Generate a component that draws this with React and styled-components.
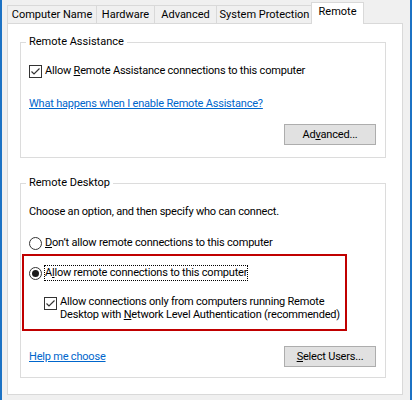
import React from 'react'
import styled, { createGlobalStyle } from 'styled-components'

const GlobalStyle = createGlobalStyle`
    html, body {
        margin: 0;
        padding: 0;
        background: #f0f0f0;
    }
    body {
        font-family: Roboto, "Liberation Sans", Arial, sans-serif;
        font-size: 11px;
        letter-spacing: -0.2px;
        color: #000;
    }
`

const TABS = [
    { label: 'Computer Name', width: 90 },
    { label: 'Hardware', width: 59 },
    { label: 'Advanced', width: 63 },
    { label: 'System Protection', width: 97 },
    { label: 'Remote', width: 53, active: true },
]

function CheckMark() {
    return (
        <svg width="13" height="13" viewBox="0 0 13 13">
            <rect x="0.5" y="0.5" width="12" height="12" fill="#fff" stroke="#333" />
            <path d="M2.5 6.5 L5 9 L10.5 3.5" fill="none" stroke="#333" strokeWidth="1.2" />
        </svg>
    )
}

function RadioMark({ checked }) {
    return (
        <svg width="13" height="13" viewBox="0 0 13 13">
            <circle cx="6.5" cy="6.5" r="6" fill="#fff" stroke="#333" />
            {checked ? <circle cx="6.5" cy="6.5" r="3.5" fill="#1a1a1a" /> : null}
        </svg>
    )
}

export default function App() {
    return (
        <Window>
            <GlobalStyle />
            <TabRow>
                {TABS.map(t => (
                    <Tab key={t.label} width={t.width} active={t.active}>{t.label}</Tab>
                ))}
            </TabRow>
            <Panel>
                <Group>
                    <Legend>Remote Assistance</Legend>
                    <GroupBody>
                        <OptionRow>
                            <CheckMark />
                            <span>Allow <U>R</U>emote Assistance connections to this computer</span>
                        </OptionRow>
                        <Link href="#" top={19}>What happens when I enable Remote Assistance?</Link>
                        <ButtonRow top={13}>
                            <Button>Ad<U>v</U>anced...</Button>
                        </ButtonRow>
                    </GroupBody>
                </Group>

                <Group top={18} bottom={10}>
                    <Legend>Remote Desktop</Legend>
                    <GroupBody>
                        <Line>Choose an option, and then specify who can connect.</Line>
                        <OptionRow top={17}>
                            <RadioMark />
                            <span><U>D</U>on’t allow remote connections to this computer</span>
                        </OptionRow>
                        <Highlight>
                            <OptionRow>
                                <RadioMark checked />
                                <Focused>A<U>l</U>low remote connections to this computer</Focused>
                            </OptionRow>
                            <OptionRow top={15} indent={15} start>
                                <BoxSlot><CheckMark /></BoxSlot>
                                <Wrapped>
                                    Allow connections only from computers running Remote<br />
                                    Desktop with <U>N</U>etwork Level Authentication (recommended)
                                </Wrapped>
                            </OptionRow>
                        </Highlight>
                        <ButtonRow top={15} spread>
                            <Link href="#" inRow>Help me choose</Link>
                            <Button><U>S</U>elect Users...</Button>
                        </ButtonRow>
                    </GroupBody>
                </Group>
            </Panel>
        </Window>
    )
}

const Window = styled.div`
    width: 412px;
    height: 400px;
    box-sizing: border-box;
    background: #f0f0f0;
    border-left: 2px solid #1c72c4;
    border-right: 2px solid #1c72c4;
    padding: 2px 7px 5px 5px;
    display: flex;
    flex-direction: column;
`

const TabRow = styled.div`
    display: flex;
    align-items: flex-end;
    height: 21px;
`

const Tab = styled.div`
    position: relative;
    box-sizing: border-box;
    width: ${props => props.width}px;
    height: ${props => props.active ? 22 : 18}px;
    margin-left: ${props => props.active ? -2 : -1}px;
    margin-bottom: ${props => props.active ? -1 : 0}px;
    z-index: ${props => props.active ? 1 : 0};
    background: ${props => props.active ? '#fff' : '#f0f0f0'};
    border: 1px solid #d9d9d9;
    border-bottom: none;
    display: flex;
    align-items: center;
    justify-content: center;
    padding-bottom: ${props => props.active ? 3 : 0}px;
    line-height: 14px;
    letter-spacing: 0;
    white-space: nowrap;

    &:first-child {
        margin-left: 0;
    }
`

const Panel = styled.div`
    flex: 1;
    box-sizing: border-box;
    background: #fff;
    border: 1px solid #d9d9d9;
    padding: 0 16px 0 12px;
`

const Group = styled.fieldset`
    margin: ${props => props.top || 11}px 0 0 0;
    border: 1px solid #dcdcdc;
    padding: 15px 9px ${props => props.bottom || 12}px 8px;
    min-width: 0;
`

const Legend = styled.legend`
    padding: 0 3px;
    margin-left: -3px;
    line-height: 14px;
    letter-spacing: 0;
`

const GroupBody = styled.div`
    display: flex;
    flex-direction: column;
`

const Line = styled.div`
    line-height: 14px;
`

const OptionRow = styled.div`
    display: flex;
    align-items: ${props => props.start ? 'flex-start' : 'center'};
    gap: 3px;
    margin-top: ${props => props.top || 0}px;
    padding-left: ${props => props.indent || 0}px;
    line-height: 14px;

    svg {
        flex: none;
    }
`

const BoxSlot = styled.span`
    display: flex;
    padding-top: 2px;
`

const Wrapped = styled.span`
    line-height: 13px;
    white-space: nowrap;
`

const Focused = styled.span`
    outline: 1px dotted #000;
    outline-offset: 0;
`

const U = styled.span`
    text-decoration: underline;
`

const Highlight = styled.div`
    margin: 4px 0 0 -7px;
    width: 325px;
    box-sizing: border-box;
    border: 2px solid #c00000;
    padding: 10px 5px 8px 5px;
    display: flex;
    flex-direction: column;
`

const Link = styled.a`
    align-self: ${props => props.inRow ? 'center' : 'flex-start'};
    margin-top: ${props => props.top || 0}px;
    color: #0066cc;
    text-decoration: underline;
    line-height: 14px;
`

const ButtonRow = styled.div`
    display: flex;
    align-items: center;
    justify-content: ${props => props.spread ? 'space-between' : 'flex-end'};
    margin-top: ${props => props.top || 0}px;
`

const Button = styled.div`
    box-sizing: border-box;
    width: 92px;
    height: 21px;
    background: #e1e1e1;
    border: 1px solid #adadad;
    display: flex;
    align-items: center;
    justify-content: center;
    line-height: 14px;
`
